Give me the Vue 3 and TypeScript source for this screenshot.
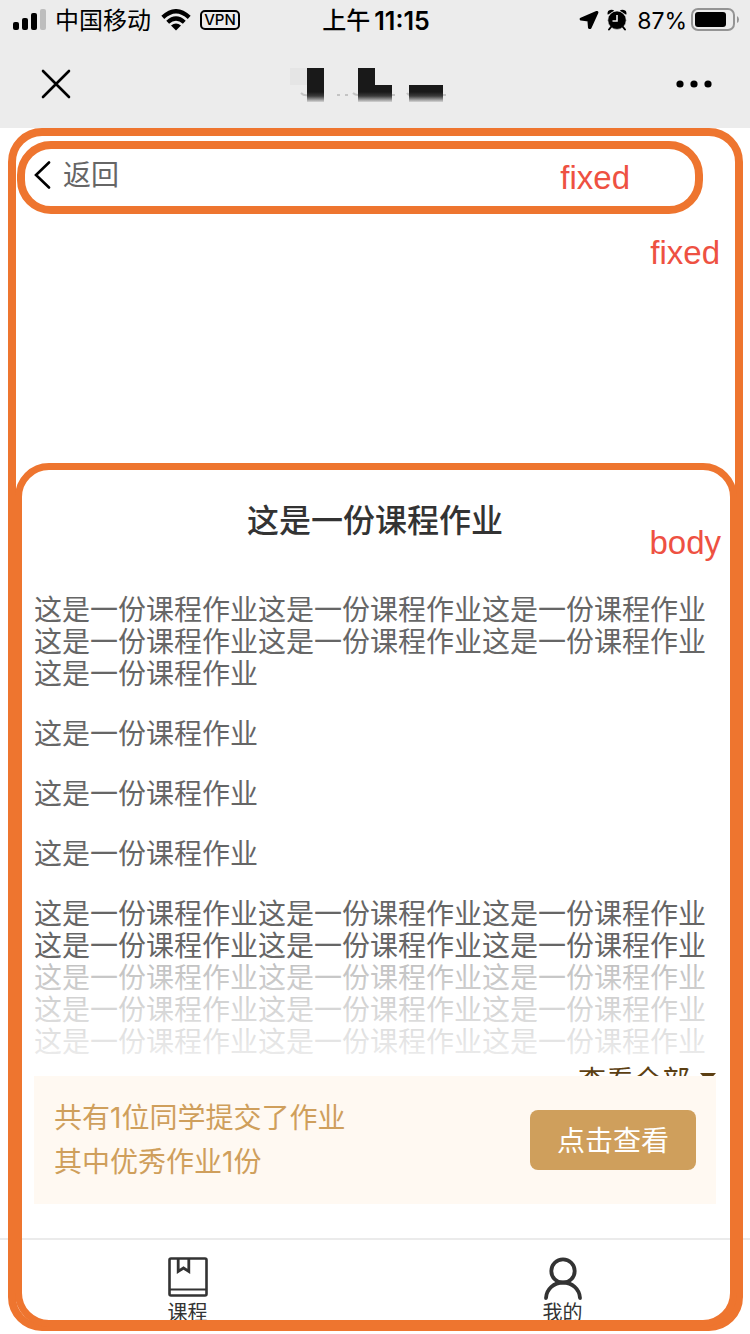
<script setup lang="ts">
const phrase = '这是一份课程作业'
const paragraphs: string[] = [phrase.repeat(7), phrase, phrase, phrase, phrase.repeat(15)]
const summary: string[] = ['共有1位同学提交了作业', '其中优秀作业1份']
</script>

<template>
  <div class="page">
    <header class="chrome">
      <div class="status">
        <div class="side">
          <svg class="signal" width="34" height="22" viewBox="0 0 34 22" aria-hidden="true">
            <rect x="0" y="13" width="6" height="8" rx="2" />
            <rect x="9" y="9" width="6" height="12" rx="2" />
            <rect x="18" y="4" width="6" height="17" rx="2" />
            <rect x="27" y="0" width="6" height="21" rx="2" fill="#bdbdbd" />
          </svg>
          <span class="carrier">中国移动</span>
          <svg width="30" height="22" viewBox="0 0 30 22" aria-hidden="true">
            <g fill="none" stroke="#000" stroke-width="4.2">
              <path d="M1.8 8.4 Q15 -4 28.2 8.4" />
              <path d="M6.7 13.3 Q15 5.8 23.3 13.3" />
            </g>
            <path d="M10 16.6 Q15 12.6 20 16.6 L15 21.6 Z" />
          </svg>
          <span class="vpn">VPN</span>
        </div>
        <div class="time"><span>上午</span><b>11:15</b></div>
        <div class="side right">
          <svg width="20" height="20" viewBox="0 0 20 20" aria-hidden="true">
            <path d="M17.6 2 L2 8.6 Q1.2 9 2 9.6 L9.4 10.4 L10 17.6 Q10.8 18.6 11.6 17.6 L18.4 2.6 Q18.6 1.6 17.6 2Z" stroke="#000" stroke-width="2" stroke-linejoin="round" />
          </svg>
          <svg class="alarm" width="20" height="22" viewBox="0 0 20 22" aria-hidden="true">
            <path d="M.8 5.8 Q-.4 2 3 1 Q5.6 .2 7.2 1.8Z M19.2 5.8 Q20.4 2 17 1 Q14.4 .2 12.8 1.8Z" />
            <circle cx="10" cy="11.2" r="9.2" stroke="#ececec" stroke-width=".6" />
            <path d="M4 18 L2 20.5 M16 18 L18 20.5" stroke="#000" stroke-width="2" stroke-linecap="round" />
            <path d="M10 6 V12 H5.5" fill="none" stroke="#ededed" stroke-width="1.6" />
          </svg>
          <span class="percent">87%</span>
          <svg width="48" height="24" viewBox="0 0 48 24" aria-hidden="true">
            <rect x="1" y="1" width="42" height="21" rx="6" fill="none" stroke="#949494" stroke-width="2" />
            <rect x="4" y="4" width="31" height="15" rx="3" />
            <path d="M46 8 Q48 9 48 11.5 Q48 14 46 15Z" fill="#949494" />
          </svg>
        </div>
      </div>
      <nav class="nav">
        <button type="button" aria-label="关闭">
          <svg width="30" height="30" viewBox="0 0 30 30" aria-hidden="true">
            <path d="M2 2 L28 28 M28 2 L2 28" stroke="#000" stroke-width="2.6" stroke-linecap="round" />
          </svg>
        </button>
        <svg class="masked" width="172" height="36" viewBox="-2 -2 172 36" aria-hidden="true">
          <defs>
            <linearGradient id="ink" gradientUnits="userSpaceOnUse" x1="0" y1="24" x2="0" y2="34">
              <stop offset="0" stop-color="#191919" />
              <stop offset=".4" stop-color="#3b3b3b" />
              <stop offset="1" stop-color="#d5d5d5" />
            </linearGradient>
          </defs>
          <rect width="17" height="17" fill="#e5e5e5" />
          <g fill="none" stroke="#c4c4c4" stroke-width="2">
            <path d="M11 25 Q14 28 18 27 M47 27 h3 M55 27 h3 M63 25 Q65 27 68 27 M102 27 h3 M117 25 Q118 27 121 27 M153 27 h3" />
          </g>
          <path d="M17 0 h17 v34 h-17z M68 0 h17 v17 h17 v17 h-34z M119 17 h34 v17 h-34z" fill="url(#ink)" />
        </svg>
        <button type="button" aria-label="更多">
          <svg width="36" height="8" viewBox="0 0 36 8" aria-hidden="true">
            <circle cx="4" cy="4" r="3.6" /><circle cx="18" cy="4" r="3.6" /><circle cx="32" cy="4" r="3.6" />
          </svg>
        </button>
      </nav>
    </header>

    <button class="back" type="button">
      <svg width="17" height="28" viewBox="0 0 17 28" aria-hidden="true">
        <path d="M15 1.5 L2 14 L15 26.5" fill="none" stroke="#000" stroke-width="2.6" stroke-linecap="round" />
      </svg>
      <span>返回</span>
    </button>

    <main class="sheet">
      <h1>这是一份课程作业</h1>
      <article>
        <p v-for="(text, i) in paragraphs" :key="i">{{ text }}</p>
        <div class="fade"></div>
      </article>
      <div class="expand">
        <button type="button">
          查看全部
          <svg width="16" height="9" viewBox="0 0 16 9" aria-hidden="true"><path d="M0 0 H16 L8 9Z" fill="#5c3f12" /></svg>
        </button>
      </div>
      <section class="card">
        <div><div v-for="line in summary" :key="line">{{ line }}</div></div>
        <button type="button">点击查看</button>
      </section>
    </main>

    <footer class="tabs">
      <a href="#course">
        <svg width="40" height="40" viewBox="0 0 40 40" fill="none" stroke="#333" aria-hidden="true">
          <rect x="1.5" y="1.5" width="37" height="37" rx="1.5" stroke-width="2.6" />
          <path d="M2 32.5 H38" stroke-width="2.2" />
          <path d="M10.2 2 V14.5 L15.5 11 L20.8 14.5 V2" stroke-width="2.8" />
        </svg>
        <span>课程</span>
      </a>
      <a href="#mine">
        <svg width="40" height="44" viewBox="0 1 40 44" fill="none" stroke="#333" stroke-width="3.8" stroke-linecap="round" aria-hidden="true">
          <circle cx="20" cy="15" r="11.7" />
          <path d="M3 42 C3.5 33 11 26.5 20 26.5 S36.5 33 37 42" />
        </svg>
        <span>我的</span>
      </a>
    </footer>

    <div class="frame outer"><span>fixed</span></div>
    <div class="frame bar"><span>fixed</span></div>
    <div class="frame content"><span>body</span></div>
  </div>
</template>

<style>
body { margin: 0; background: #fff; }
</style>

<style scoped>
.page {
  position: relative;
  display: flex;
  flex-direction: column;
  min-height: 100vh;
  overflow: hidden;
  background: #fff;
  color: #666;
  font-family: Inter, "Noto Sans CJK SC", sans-serif;
  font-size: 28px;
  line-height: 32px;
}
button {
  padding: 0;
  border: 0;
  background: none;
  color: inherit;
  font: inherit;
  cursor: pointer;
}
svg { display: block; flex: none; }
.chrome { height: 128px; background: #ececec; color: #000; }
.status {
  display: grid;
  grid-template-columns: 1fr auto 1fr;
  align-items: center;
  height: 40px;
  padding: 0 11px 0 13px;
  font-size: 24px;
}
.side { display: flex; align-items: center; }
.right { justify-content: flex-end; }
.carrier { margin: 0 10px 0 8px; padding-top: 2px; }
.vpn {
  box-sizing: border-box;
  width: 40px;
  height: 20px;
  margin-left: 9px;
  border: 2px solid #000;
  border-radius: 5px;
  font-size: 15px;
  font-weight: 500;
  line-height: 16px;
  text-align: center;
}
.time { display: flex; gap: 4px; padding-top: 2px; font-weight: 500; }
.time b { font-size: 25px; font-weight: 600; }
.alarm { margin: 0 10px 0 8px; }
.percent { margin-right: 4px; padding-top: 2px; font-size: 23px; }
.nav {
  display: flex;
  align-items: center;
  justify-content: space-between;
  height: 88px;
  padding: 0 38px 0 41px;
}
.back {
  display: flex;
  align-items: center;
  gap: 12px;
  align-self: flex-start;
  height: 94px;
  padding: 0 34px;
}
.sheet { margin-top: auto; padding: 30px 34px 34px; }
h1 {
  margin: 0 0 53px;
  color: #333;
  font-size: 32px;
  font-weight: 500;
  line-height: 40px;
  text-align: center;
}
article { position: relative; }
p { margin: 0 0 28px; overflow-wrap: anywhere; }
p:last-of-type { margin: 0; }
.fade {
  position: absolute;
  inset: auto 0 0;
  height: 94px;
  background: linear-gradient(rgba(255, 255, 255, .6), rgba(255, 255, 255, .88));
}
.expand { height: 18px; overflow: hidden; color: #5c3f12; }
.expand button { display: flex; align-items: center; gap: 10px; margin: 7px 0 0 auto; }
.expand svg { margin-bottom: 8px; }
.card {
  display: flex;
  align-items: center;
  justify-content: space-between;
  padding: 20px;
  background: #fff9f2;
  color: #cf9f5c;
  line-height: 44px;
}
.card button {
  height: 60px;
  padding: 2px 27px 0;
  border-radius: 8px;
  background: #cf9f5c;
  color: #fff;
}
.tabs {
  display: grid;
  grid-template-columns: 1fr 1fr;
  box-sizing: border-box;
  height: 96px;
  border-top: 2px solid #ebebeb;
}
.tabs a {
  display: flex;
  flex-direction: column;
  align-items: center;
  padding-top: 17px;
  color: #333;
  font-size: 20px;
  line-height: 28px;
  text-decoration: none;
}
.tabs svg { height: 44px; margin-bottom: -2px; }
.tabs a:first-child svg { height: 40px; margin-bottom: 2px; }
.frame {
  position: absolute;
  box-sizing: border-box;
  border: 7px solid #ee752f;
  border-radius: 34px;
  pointer-events: none;
}
.frame span {
  position: absolute;
  color: #ee5142;
  font-family: "Liberation Sans", sans-serif;
  font-size: 33px;
  line-height: 40px;
}
.outer { inset: 128px 7px 3px 8px; border-width: 8px; }
.outer span { top: 97px; right: 15px; }
.bar { inset: 141px 47px auto 17px; height: 73px; border-width: 8px; }
.bar span { top: 9px; right: 65px; }
.content { inset: 463px 13px 7px 15px; }
.content span { top: 53px; right: 9px; }
</style>
